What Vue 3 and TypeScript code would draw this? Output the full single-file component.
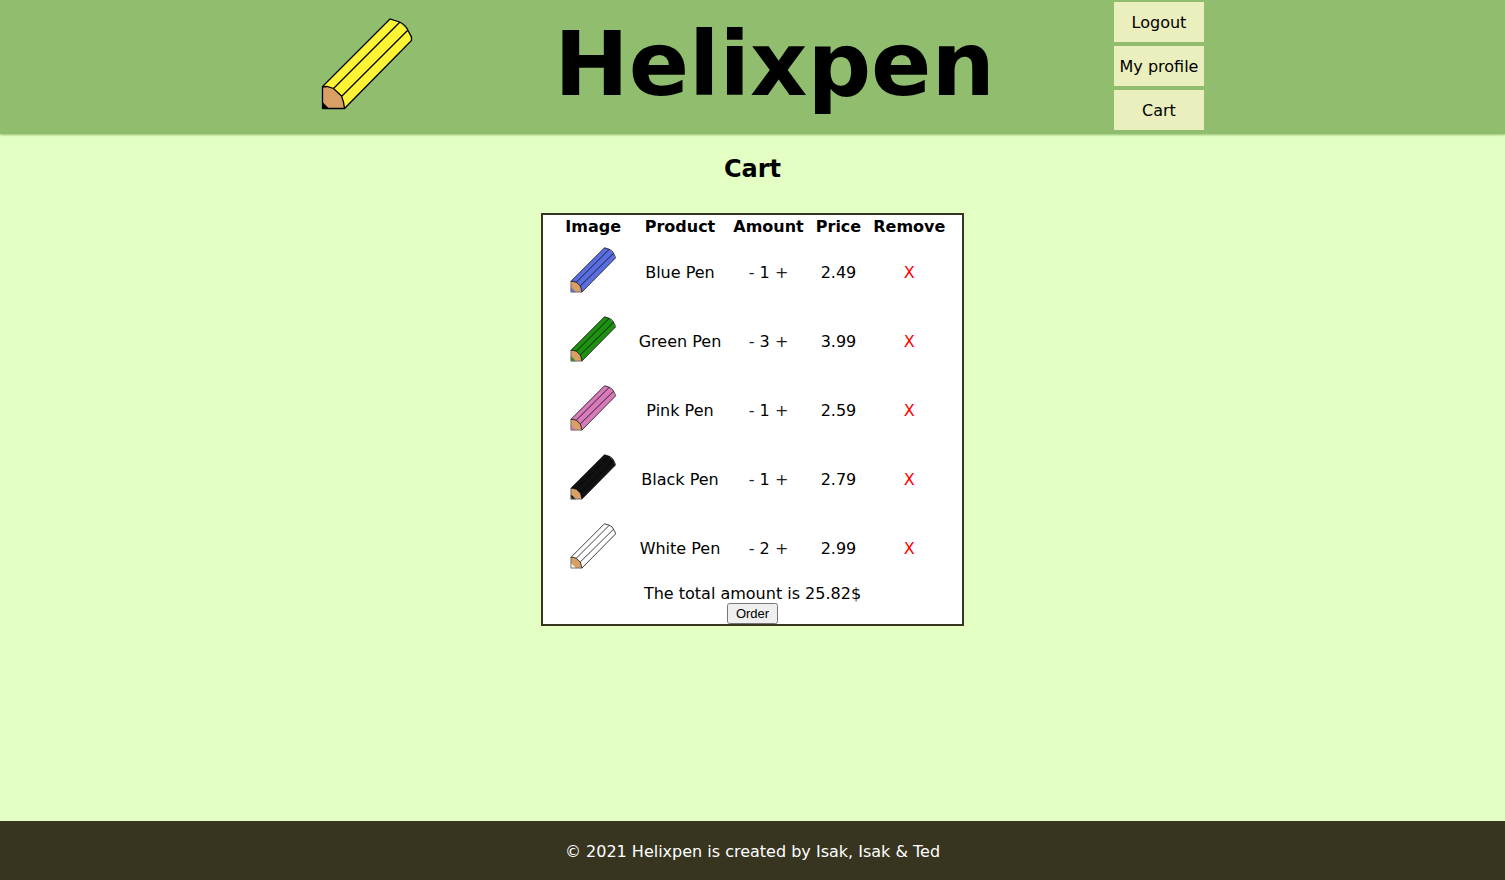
<script setup lang="ts">
import { computed, ref } from 'vue'

interface CartItem {
  name: string
  color: string
  amount: number
  price: number
}

const items = ref<CartItem[]>([
  { name: 'Blue Pen', color: '#5b6ee1', amount: 1, price: 2.49 },
  { name: 'Green Pen', color: '#1f9112', amount: 3, price: 3.99 },
  { name: 'Pink Pen', color: '#d77bba', amount: 1, price: 2.59 },
  { name: 'Black Pen', color: '#111111', amount: 1, price: 2.79 },
  { name: 'White Pen', color: '#ffffff', amount: 2, price: 2.99 },
])

const total = computed(() =>
  items.value.reduce((sum, item) => sum + item.amount * item.price, 0).toFixed(2),
)

function decrease(item: CartItem) {
  if (item.amount > 1) item.amount--
}

function remove(item: CartItem) {
  items.value = items.value.filter((other) => other !== item)
}
</script>

<template>
  <div class="page">
    <header class="header">
      <svg class="logo" viewBox="0 0 134 134" role="img" aria-label="Helixpen logo">
        <path fill="#fff335" d="M21.5 87 89 19.5 98.5 22.5 107 30.5 110.5 40.5 43.5 108 40.5 96 32.5 88.5Z" />
        <path fill="#d9a066" d="M21.5 87 26 86.5 32.5 88.5 40.5 96 43.5 108.5H21.5Z" />
        <path fill="#000" d="M21.5 102 28 108.5H21.5Z" />
        <path class="outline" d="M21.5 108.5V86.5L89 19 98.5 22Q105 25 107 30.5L110.5 37V40.5L43.5 108.5ZM21.5 87 26 86.5 32.5 88.5 40.5 96Q43 102 43.5 108.5M32.5 88.5 98.5 22.5M40.5 96.5 107 30" />
      </svg>
      <h1 class="title">Helixpen</h1>
      <nav class="nav">
        <a href="#logout">Logout</a>
        <a href="#profile">My profile</a>
        <a href="#cart">Cart</a>
      </nav>
    </header>

    <main class="main">
      <h2 class="heading">Cart</h2>
      <section class="cart">
        <table>
          <thead>
            <tr>
              <th>Image</th>
              <th>Product</th>
              <th>Amount</th>
              <th>Price</th>
              <th>Remove</th>
            </tr>
          </thead>
          <tbody>
            <tr v-for="item in items" :key="item.name">
              <td class="picture">
                <svg class="pen" viewBox="0 0 134 134" role="img" :aria-label="item.name">
                  <path :fill="item.color" d="M21.5 87 89 19.5 98.5 22.5 107 30.5 110.5 40.5 43.5 108 40.5 96 32.5 88.5Z" />
                  <path fill="#d9a066" d="M21.5 87 26 86.5 32.5 88.5 40.5 96 43.5 108.5H21.5Z" />
                  <path :fill="item.color" d="M21.5 98 32 108.5H21.5Z" />
                  <path class="outline" d="M43.5 108.5 110.5 40.5V37L107 30.5Q105 25 98.5 22.5L89 19.5 21.5 87 26 86.5 32.5 88.5 40.5 96Q43 102 43.5 108.5M32.5 88.5 98.5 22.5M40.5 96 107 30.5" />
                  <path class="edge" d="M22 87V108H43.5" />
                </svg>
              </td>
              <td>{{ item.name }}</td>
              <td>
                <button class="plain" type="button" :aria-label="`Fewer of ${item.name}`" @click="decrease(item)">-</button>
                {{ item.amount }}
                <button class="plain" type="button" :aria-label="`More of ${item.name}`" @click="item.amount++">+</button>
              </td>
              <td>{{ item.price.toFixed(2) }}</td>
              <td>
                <button class="plain remove" type="button" :aria-label="`Remove ${item.name}`" @click="remove(item)">X</button>
              </td>
            </tr>
          </tbody>
        </table>
        <p class="total">The total amount is {{ total }}$</p>
        <button class="order" type="button">Order</button>
      </section>
    </main>

    <footer class="footer">© 2021 Helixpen is created by Isak, Isak &amp; Ted</footer>
  </div>
</template>

<style>
body {
  margin: 0;
}
</style>

<style scoped>
.page {
  display: flex;
  flex-direction: column;
  min-height: 100vh;
  background: #e3ffc3;
  color: #000;
  font: 16px/19px Verdana, "DejaVu Sans", sans-serif;
}

.header {
  display: flex;
  justify-content: space-between;
  padding: 0 20%;
  background: #91be6e;
  box-shadow: 0 1px 2px #91be6e;
}

.logo {
  display: block;
  width: 134px;
  height: 134px;
}

.outline {
  fill: none;
  stroke: #000;
  stroke-width: 1.3;
}

.title {
  margin: 0;
  font-size: 89px;
  line-height: 128px;
}

.nav {
  display: flex;
  flex-direction: column;
  gap: 4px;
  padding-top: 2px;
}

.nav a {
  min-width: 80px;
  padding: 1px 5px 0;
  background: #ebeebd;
  color: #000;
  line-height: 39px;
  text-align: center;
  text-decoration: none;
}

.main {
  display: flex;
  flex: 1;
  flex-direction: column;
  align-items: center;
}

.heading {
  margin: 21px 0 29px;
  font-size: 24px;
  line-height: 29px;
}

.cart {
  display: flex;
  flex-direction: column;
  align-items: center;
  padding: 0 10px;
  border: 2px solid #37351f;
  background: #fff;
}

table {
  border-spacing: 2px;
  text-align: center;
}

th {
  padding: 0 5px;
}

td {
  padding: 2px 5px 0;
}

.picture {
  padding-top: 0;
}

.pen {
  display: block;
  width: 67px;
  height: 67px;
}

.pen .outline {
  stroke-width: 1.5;
}

.edge {
  fill: none;
  stroke: #777;
  stroke-width: 2;
}

.plain {
  padding: 0;
  border: 0;
  background: none;
  color: #222;
  font: inherit;
  cursor: pointer;
}

.plain.remove {
  color: #f00;
}

.total {
  margin: 0;
  padding-top: 1px;
}

.order {
  padding: 1px 7px;
  font-family: Arial, "Liberation Sans", sans-serif;
  font-size: 13px;
  line-height: 15px;
}

.footer {
  padding: 21px 20px 19px;
  background: #37351f;
  color: #fff;
  text-align: center;
}
</style>
